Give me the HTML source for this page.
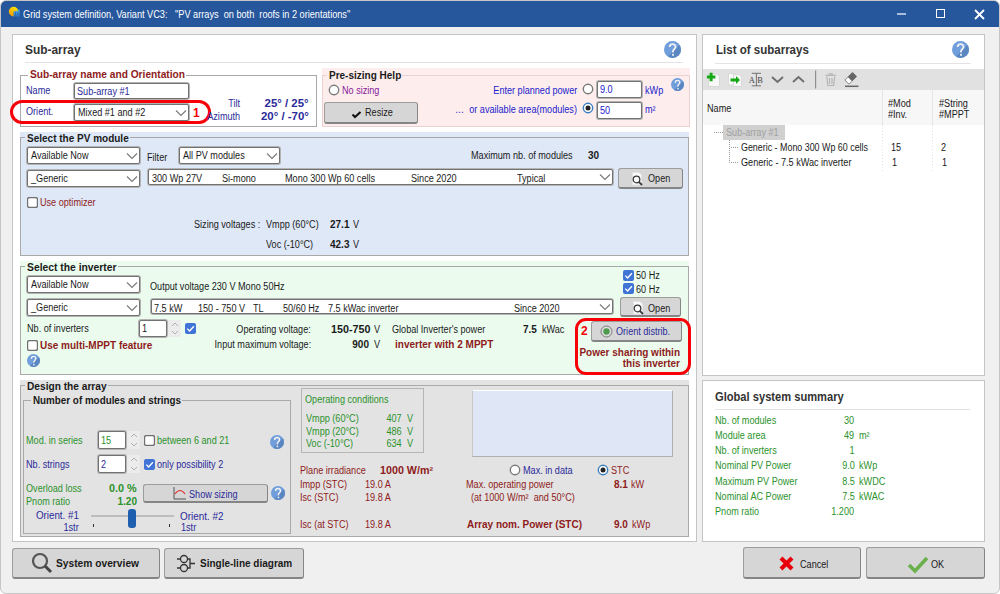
<!DOCTYPE html>
<html><head><meta charset="utf-8"><style>
html,body{margin:0;padding:0;width:1000px;height:594px;overflow:hidden;background:#fff;}
body{position:relative;font-family:"Liberation Sans",sans-serif;}
body>div,body>span,body>svg{position:absolute;}
span{white-space:pre;}
</style></head><body>
<div style="left:0;top:0;width:1000px;height:594px;background:#f0f0f0;border:1px solid #c6c6c6;border-radius:6px;box-sizing:border-box;"></div>
<div style="left:1px;top:1px;width:998px;height:26px;background:#26569c;border-radius:5px 5px 0 0;"></div>
<svg style="left:4px;top:0px" width="20" height="20"><defs><linearGradient id="tig" x1="0.7" y1="0" x2="0.2" y2="1"><stop offset="0" stop-color="#ffe000"/><stop offset="1" stop-color="#f59a00"/></linearGradient><linearGradient id="tib" x1="0" y1="0" x2="0" y2="1"><stop offset="0" stop-color="#4fb0ee"/><stop offset="1" stop-color="#2f6fc0"/></linearGradient></defs><path d="M9.6 16.4 A4.8 4.8 0 1 1 14.4 11.6 L9.6 11.6 Z" fill="url(#tig)"/><rect x="9.9" y="11.2" width="1.5" height="5.6" fill="url(#tib)"/><rect x="12" y="10.5" width="1.5" height="6.3" fill="url(#tib)"/><rect x="14.1" y="9.7" width="1.5" height="7.1" fill="url(#tib)"/></svg>
<span style="top:8.08px;font-size:11px;line-height:13.20px;color:#ffffff;left:23px;transform-origin:0 0;transform:scaleX(0.833);">Grid system definition, Variant VC3:   &quot;PV arrays  on both  roofs in 2 orientations&quot;</span>
<div style="left:897px;top:13px;width:9px;height:2px;background:#a9bedc;"></div>
<div style="left:936px;top:9px;width:9px;height:9px;border:1.5px solid #fff;box-sizing:border-box;"></div>
<svg style="left:974px;top:9px" width="11" height="11"><path d="M1 1 L10 10 M10 1 L1 10" stroke="#fff" stroke-width="1.8"/></svg>
<div style="left:12px;top:34px;width:685px;height:508px;background:#fff;border:1px solid #c4c4c4;box-sizing:border-box;"></div>
<span style="top:43.04px;font-size:12px;line-height:14.40px;color:#333;font-weight:bold;left:25px;transform-origin:0 0;transform:scaleX(0.991);">Sub-array</span>
<div style="left:25px;top:62px;width:658px;height:1px;background:#e3e3e3;"></div>
<svg style="left:663.5px;top:40.5px" width="17.0" height="17.0" viewBox="0 0 20 20"><defs><clipPath id="hc10"><circle cx="10" cy="10" r="10"/></clipPath></defs><circle cx="10" cy="10" r="10" fill="#6f9edb"/><path d="M20 3 L3 20 L20 20 Z" fill="#5a86c2" clip-path="url(#hc10)"/><path d="M6.6 7.2 C6.6 4.9 8.1 3.6 10.1 3.6 C12.2 3.6 13.6 4.9 13.6 6.9 C13.6 9.2 10.6 9.9 10.6 12.3 V13.6" fill="none" stroke="#f2f2f2" stroke-width="2.1"/><circle cx="10.6" cy="16.3" r="1.3" fill="#f2f2f2"/></svg>
<div style="left:20px;top:75px;width:297px;height:52px;border:1px solid #a9a9a9;box-sizing:border-box;"></div>
<div style="left:28px;top:70px;width:158px;height:11px;background:#fff;"></div>
<span style="top:69.21px;font-size:10px;line-height:12.00px;color:#8e1b1b;font-weight:bold;left:30px;transform-origin:0 0;transform:scaleX(1.018);">Sub-array name and Orientation</span>
<span style="top:84.61px;font-size:10px;line-height:12.00px;color:#2a2a9a;left:26px;transform-origin:0 0;transform:scaleX(0.910);">Name</span>
<div style="left:74px;top:83px;width:115px;height:16px;background:#fff;border:1px solid #727272;border-radius:2px;box-sizing:border-box;box-shadow:0 0 0 1px #b4b4b4;"></div>
<span style="top:85.61px;font-size:10px;line-height:12.00px;color:#2a2a9a;left:77px;transform-origin:0 0;transform:scaleX(0.910);">Sub-array #1</span>
<span style="top:105.61px;font-size:10px;line-height:12.00px;color:#2a2a9a;left:26px;transform-origin:0 0;transform:scaleX(0.910);">Orient.</span>
<div style="left:74px;top:104px;width:115px;height:17px;background:#fff;border:1px solid #727272;border-radius:2px;box-sizing:border-box;box-shadow:0 0 0 1px #b4b4b4;"></div>
<svg style="left:175px;top:108.5px" width="12" height="8"><path d="M1 1.5 L6 6.5 L11 1.5" fill="none" stroke="#7a7a7a" stroke-width="1.15"/></svg>
<span style="top:107.11px;font-size:10px;line-height:12.00px;color:#1a1a1a;left:78px;transform-origin:0 0;transform:scaleX(0.910);">Mixed #1 and #2</span>
<span style="top:105.54px;font-size:12px;line-height:14.40px;color:#f80008;font-weight:bold;left:193px;transform-origin:0 0;">1</span>
<div style="left:10px;top:100px;width:201px;height:24px;border:3px solid #f80008;border-radius:12px;box-sizing:border-box;"></div>
<span style="top:97.61px;font-size:10px;line-height:12.00px;color:#2a2a9a;left:227.04px;transform-origin:100% 0;transform:scaleX(0.910);">Tilt</span>
<span style="top:110.61px;font-size:10px;line-height:12.00px;color:#2a2a9a;left:203.88px;transform-origin:100% 0;transform:scaleX(0.910);">Azimuth</span>
<span style="top:97.61px;font-size:10px;line-height:12.00px;color:#2a2a9a;font-weight:bold;left:270.43px;transform-origin:100% 0;transform:scaleX(1.141);">25° / 25°</span>
<span style="top:110.61px;font-size:10px;line-height:12.00px;color:#2a2a9a;font-weight:bold;left:267.10px;transform-origin:100% 0;transform:scaleX(1.145);">20° / -70°</span>
<div style="left:322px;top:68px;width:368px;height:59px;background:#fdeded;"></div>
<div style="left:322px;top:75px;width:368px;height:52px;border:1px solid #ead2d2;box-sizing:border-box;"></div>
<div style="left:327px;top:69px;width:75px;height:12px;background:#fdeded;"></div>
<span style="top:69.61px;font-size:10px;line-height:12.00px;color:#1a1a1a;font-weight:bold;left:329px;transform-origin:0 0;">Pre-sizing Help</span>
<svg style="left:328.0px;top:84.0px" width="12" height="12"><circle cx="6.0" cy="6.0" r="4.7" fill="#fff" stroke="#7a7a7a" stroke-width="1.4"/></svg>
<span style="top:84.61px;font-size:10px;line-height:12.00px;color:#8a1a9a;left:342px;transform-origin:0 0;transform:scaleX(0.910);">No sizing</span>
<div style="left:324px;top:102px;width:94px;height:22px;background:#d6d6d6;border:1px solid #9c9c9c;border-right-color:#858585;border-bottom:2px solid #858585;border-radius:3px;box-sizing:border-box;"></div>
<svg style="left:351px;top:109px" width="11" height="10"><path d="M1.5 5.5 L4 8 L9.5 3" fill="none" stroke="#111" stroke-width="2"/></svg>
<span style="top:106.61px;font-size:10px;line-height:12.00px;color:#1a1a1a;left:365px;transform-origin:0 0;transform:scaleX(0.910);">Resize</span>
<span style="top:84.61px;font-size:10px;line-height:12.00px;color:#2222cc;left:484.72px;transform-origin:100% 0;transform:scaleX(0.910);">Enter planned power</span>
<svg style="left:582.0px;top:83.0px" width="12" height="12"><circle cx="6.0" cy="6.0" r="4.7" fill="#fff" stroke="#7a7a7a" stroke-width="1.4"/></svg>
<div style="left:597px;top:81px;width:45px;height:17px;background:#fff;border:1px solid #727272;border-radius:2px;box-sizing:border-box;box-shadow:0 0 0 1px #b4b4b4;"></div>
<span style="top:84.11px;font-size:10px;line-height:12.00px;color:#2222cc;left:600px;transform-origin:0 0;transform:scaleX(0.910);">9.0</span>
<span style="top:84.61px;font-size:10px;line-height:12.00px;color:#2222cc;left:645px;transform-origin:0 0;transform:scaleX(0.910);">kWp</span>
<span style="top:103.61px;font-size:10px;line-height:12.00px;color:#2222cc;left:443.06px;transform-origin:100% 0;transform:scaleX(0.910);">…  or available area(modules)</span>
<svg style="left:582.0px;top:102.0px" width="12" height="12"><circle cx="6.0" cy="6.0" r="4.7" fill="#fff" stroke="#3c7fc0" stroke-width="1.4"/><circle cx="6.0" cy="6.0" r="2.5" fill="#222"/></svg>
<div style="left:597px;top:102px;width:45px;height:17px;background:#fff;border:1px solid #727272;border-radius:2px;box-sizing:border-box;box-shadow:0 0 0 1px #b4b4b4;"></div>
<span style="top:105.11px;font-size:10px;line-height:12.00px;color:#2222cc;left:600px;transform-origin:0 0;transform:scaleX(0.910);">50</span>
<span style="top:103.61px;font-size:10px;line-height:12.00px;color:#2222cc;left:645px;transform-origin:0 0;transform:scaleX(0.910);">m²</span>
<svg style="left:670.5px;top:77.5px" width="13.0" height="13.0" viewBox="0 0 20 20"><defs><clipPath id="hc46"><circle cx="10" cy="10" r="10"/></clipPath></defs><circle cx="10" cy="10" r="10" fill="#6f9edb"/><path d="M20 3 L3 20 L20 20 Z" fill="#5a86c2" clip-path="url(#hc46)"/><path d="M6.6 7.2 C6.6 4.9 8.1 3.6 10.1 3.6 C12.2 3.6 13.6 4.9 13.6 6.9 C13.6 9.2 10.6 9.9 10.6 12.3 V13.6" fill="none" stroke="#f2f2f2" stroke-width="2.1"/><circle cx="10.6" cy="16.3" r="1.3" fill="#f2f2f2"/></svg>
<div style="left:20px;top:132px;width:669px;height:124px;background:#dfe8f7;"></div>
<div style="left:20px;top:137px;width:669px;height:119px;border:1px solid #a9a9a9;box-sizing:border-box;"></div>
<div style="left:25px;top:132px;width:105px;height:11px;background:#dfe8f7;"></div>
<span style="top:132.92px;font-size:10px;line-height:12.00px;color:#1a1a1a;font-weight:bold;left:27px;transform-origin:0 0;">Select the PV module</span>
<div style="left:27px;top:147px;width:113px;height:17px;background:#fff;border:1px solid #727272;border-radius:2px;box-sizing:border-box;box-shadow:0 0 0 1px #b4b4b4;"></div>
<svg style="left:126px;top:151.5px" width="12" height="8"><path d="M1 1.5 L6 6.5 L11 1.5" fill="none" stroke="#7a7a7a" stroke-width="1.15"/></svg>
<span style="top:150.12px;font-size:10px;line-height:12.00px;color:#1a1a1a;left:31px;transform-origin:0 0;transform:scaleX(0.910);">Available Now</span>
<span style="top:151.62px;font-size:10px;line-height:12.00px;color:#1a1a1a;left:147px;transform-origin:0 0;transform:scaleX(0.910);">Filter</span>
<div style="left:179px;top:147px;width:101px;height:17px;background:#fff;border:1px solid #727272;border-radius:2px;box-sizing:border-box;box-shadow:0 0 0 1px #b4b4b4;"></div>
<svg style="left:266px;top:151.5px" width="12" height="8"><path d="M1 1.5 L6 6.5 L11 1.5" fill="none" stroke="#7a7a7a" stroke-width="1.15"/></svg>
<span style="top:150.12px;font-size:10px;line-height:12.00px;color:#1a1a1a;left:183px;transform-origin:0 0;transform:scaleX(0.910);">All PV modules</span>
<span style="top:149.62px;font-size:10px;line-height:12.00px;color:#1a1a1a;left:471px;transform-origin:0 0;transform:scaleX(0.910);">Maximum nb. of modules</span>
<span style="top:149.62px;font-size:10px;line-height:12.00px;color:#1a1a1a;font-weight:bold;left:588px;transform-origin:0 0;">30</span>
<div style="left:27px;top:170px;width:113px;height:17px;background:#fff;border:1px solid #727272;border-radius:2px;box-sizing:border-box;box-shadow:0 0 0 1px #b4b4b4;"></div>
<svg style="left:126px;top:174.5px" width="12" height="8"><path d="M1 1.5 L6 6.5 L11 1.5" fill="none" stroke="#7a7a7a" stroke-width="1.15"/></svg>
<span style="top:173.12px;font-size:10px;line-height:12.00px;color:#1a1a1a;left:31px;transform-origin:0 0;transform:scaleX(0.910);">_Generic</span>
<div style="left:148px;top:169px;width:465px;height:16px;background:#fff;border:1px solid #727272;border-radius:2px;box-sizing:border-box;box-shadow:0 0 0 1px #b4b4b4;"></div>
<svg style="left:599px;top:173.0px" width="12" height="8"><path d="M1 1.5 L6 6.5 L11 1.5" fill="none" stroke="#7a7a7a" stroke-width="1.15"/></svg>
<span style="top:172.62px;font-size:10px;line-height:12.00px;color:#1a1a1a;left:152px;transform-origin:0 0;transform:scaleX(0.910);">300 Wp 27V</span>
<span style="top:172.62px;font-size:10px;line-height:12.00px;color:#1a1a1a;left:222px;transform-origin:0 0;transform:scaleX(0.910);">Si-mono</span>
<span style="top:172.62px;font-size:10px;line-height:12.00px;color:#1a1a1a;left:285px;transform-origin:0 0;transform:scaleX(0.910);">Mono 300 Wp 60 cells</span>
<span style="top:172.62px;font-size:10px;line-height:12.00px;color:#1a1a1a;left:411px;transform-origin:0 0;transform:scaleX(0.910);">Since 2020</span>
<span style="top:172.62px;font-size:10px;line-height:12.00px;color:#1a1a1a;left:517px;transform-origin:0 0;transform:scaleX(0.910);">Typical</span>
<div style="left:618px;top:168px;width:65px;height:21px;background:#d6d6d6;border:1px solid #9c9c9c;border-right-color:#858585;border-bottom:2px solid #858585;border-radius:3px;box-sizing:border-box;"></div>
<svg style="left:631px;top:172px" width="14" height="14"><path d="M1.5 0.5 H8 L10.5 3 V13 H1.5 Z" fill="#fafafa" stroke="#e4e4e4"/><circle cx="5.5" cy="7.5" r="3.3" fill="#fafafa" stroke="#3a3a3a" stroke-width="1.3"/><path d="M7.8 9.8 L11 13" stroke="#3a3a3a" stroke-width="1.8"/></svg>
<span style="top:172.62px;font-size:10px;line-height:12.00px;color:#1a1a1a;left:648px;transform-origin:0 0;transform:scaleX(0.910);">Open</span>
<svg style="left:27px;top:197px" width="11" height="11"><rect x="0.5" y="0.5" width="10" height="10" rx="2" fill="#fff" stroke="#707070" stroke-width="1.4"/></svg>
<span style="top:196.62px;font-size:10px;line-height:12.00px;color:#8e1b1b;left:40px;transform-origin:0 0;transform:scaleX(0.910);">Use optimizer</span>
<span style="top:218.62px;font-size:10px;line-height:12.00px;color:#1a1a1a;left:194px;transform-origin:0 0;transform:scaleX(0.910);">Sizing voltages :</span>
<span style="top:218.62px;font-size:10px;line-height:12.00px;color:#1a1a1a;left:266px;transform-origin:0 0;transform:scaleX(0.910);">Vmpp (60°C)</span>
<span style="top:218.62px;font-size:10px;line-height:12.00px;color:#1a1a1a;font-weight:bold;left:330px;transform-origin:0 0;">27.1</span>
<span style="top:218.62px;font-size:10px;line-height:12.00px;color:#1a1a1a;left:353px;transform-origin:0 0;transform:scaleX(0.910);">V</span>
<span style="top:238.62px;font-size:10px;line-height:12.00px;color:#1a1a1a;left:266px;transform-origin:0 0;transform:scaleX(0.910);">Voc (-10°C)</span>
<span style="top:238.62px;font-size:10px;line-height:12.00px;color:#1a1a1a;font-weight:bold;left:330px;transform-origin:0 0;">42.3</span>
<span style="top:238.62px;font-size:10px;line-height:12.00px;color:#1a1a1a;left:353px;transform-origin:0 0;transform:scaleX(0.910);">V</span>
<div style="left:20px;top:261px;width:669px;height:114px;background:#ebfcef;"></div>
<div style="left:20px;top:266px;width:669px;height:109px;border:1px solid #a9a9a9;box-sizing:border-box;"></div>
<div style="left:25px;top:261px;width:93px;height:11px;background:#ebfcef;"></div>
<span style="top:261.92px;font-size:10px;line-height:12.00px;color:#1a1a1a;font-weight:bold;left:27px;transform-origin:0 0;transform:scaleX(1.033);">Select the inverter</span>
<div style="left:27px;top:276px;width:113px;height:17px;background:#fff;border:1px solid #727272;border-radius:2px;box-sizing:border-box;box-shadow:0 0 0 1px #b4b4b4;"></div>
<svg style="left:126px;top:280.5px" width="12" height="8"><path d="M1 1.5 L6 6.5 L11 1.5" fill="none" stroke="#7a7a7a" stroke-width="1.15"/></svg>
<span style="top:279.12px;font-size:10px;line-height:12.00px;color:#1a1a1a;left:31px;transform-origin:0 0;transform:scaleX(0.910);">Available Now</span>
<span style="top:280.62px;font-size:10px;line-height:12.00px;color:#1a1a1a;left:150px;transform-origin:0 0;transform:scaleX(0.910);">Output voltage 230 V Mono 50Hz</span>
<svg style="left:623px;top:270px" width="11" height="11"><rect x="0" y="0" width="11" height="11" rx="2" fill="#3f74d6"/><path d="M2.3 5.6 L4.6 8 L8.9 3.2" fill="none" stroke="#fff" stroke-width="1.3"/></svg>
<span style="top:269.62px;font-size:10px;line-height:12.00px;color:#1a1a1a;left:636px;transform-origin:0 0;transform:scaleX(0.910);">50 Hz</span>
<svg style="left:623px;top:283px" width="11" height="11"><rect x="0" y="0" width="11" height="11" rx="2" fill="#3f74d6"/><path d="M2.3 5.6 L4.6 8 L8.9 3.2" fill="none" stroke="#fff" stroke-width="1.3"/></svg>
<span style="top:283.62px;font-size:10px;line-height:12.00px;color:#1a1a1a;left:636px;transform-origin:0 0;transform:scaleX(0.910);">60 Hz</span>
<div style="left:27px;top:299px;width:113px;height:17px;background:#fff;border:1px solid #727272;border-radius:2px;box-sizing:border-box;box-shadow:0 0 0 1px #b4b4b4;"></div>
<svg style="left:126px;top:303.5px" width="12" height="8"><path d="M1 1.5 L6 6.5 L11 1.5" fill="none" stroke="#7a7a7a" stroke-width="1.15"/></svg>
<span style="top:302.12px;font-size:10px;line-height:12.00px;color:#1a1a1a;left:31px;transform-origin:0 0;transform:scaleX(0.910);">_Generic</span>
<div style="left:151px;top:299px;width:462px;height:15px;background:#fff;border:1px solid #727272;border-radius:2px;box-sizing:border-box;box-shadow:0 0 0 1px #b4b4b4;"></div>
<svg style="left:599px;top:302.5px" width="12" height="8"><path d="M1 1.5 L6 6.5 L11 1.5" fill="none" stroke="#7a7a7a" stroke-width="1.15"/></svg>
<span style="top:302.62px;font-size:10px;line-height:12.00px;color:#1a1a1a;left:154px;transform-origin:0 0;transform:scaleX(0.910);">7.5 kW</span>
<span style="top:302.62px;font-size:10px;line-height:12.00px;color:#1a1a1a;left:198px;transform-origin:0 0;transform:scaleX(0.910);">150 - 750 V</span>
<span style="top:302.62px;font-size:10px;line-height:12.00px;color:#1a1a1a;left:253px;transform-origin:0 0;transform:scaleX(0.910);">TL</span>
<span style="top:302.62px;font-size:10px;line-height:12.00px;color:#1a1a1a;left:283px;transform-origin:0 0;transform:scaleX(0.910);">50/60 Hz</span>
<span style="top:302.62px;font-size:10px;line-height:12.00px;color:#1a1a1a;left:328px;transform-origin:0 0;transform:scaleX(0.910);">7.5 kWac inverter</span>
<span style="top:302.62px;font-size:10px;line-height:12.00px;color:#1a1a1a;left:514px;transform-origin:0 0;transform:scaleX(0.910);">Since 2020</span>
<div style="left:620px;top:297px;width:61px;height:20px;background:#d6d6d6;border:1px solid #9c9c9c;border-right-color:#858585;border-bottom:2px solid #858585;border-radius:3px;box-sizing:border-box;"></div>
<svg style="left:632px;top:301px" width="14" height="14"><path d="M1.5 0.5 H8 L10.5 3 V13 H1.5 Z" fill="#fafafa" stroke="#e4e4e4"/><circle cx="5.5" cy="7.5" r="3.3" fill="#fafafa" stroke="#3a3a3a" stroke-width="1.3"/><path d="M7.8 9.8 L11 13" stroke="#3a3a3a" stroke-width="1.8"/></svg>
<span style="top:302.62px;font-size:10px;line-height:12.00px;color:#1a1a1a;left:648px;transform-origin:0 0;transform:scaleX(0.910);">Open</span>
<span style="top:322.62px;font-size:10px;line-height:12.00px;color:#1a1a1a;left:27px;transform-origin:0 0;transform:scaleX(0.910);">Nb. of inverters</span>
<div style="left:139px;top:320px;width:28px;height:17px;background:#fff;border:1px solid #727272;border-radius:2px;box-sizing:border-box;box-shadow:0 0 0 1px #b4b4b4;"></div>
<span style="top:323.12px;font-size:10px;line-height:12.00px;color:#1a1a1a;left:142px;transform-origin:0 0;transform:scaleX(0.910);">1</span>
<div style="left:168px;top:320px;width:13px;height:17px;background:#ececec;"></div>
<svg style="left:169px;top:321px" width="12" height="15"><path d="M3 5 L6 2 L9 5 M3 10 L6 13 L9 10" fill="none" stroke="#b0b0b0" stroke-width="1"/></svg>
<svg style="left:185px;top:323px" width="11" height="11"><rect x="0" y="0" width="11" height="11" rx="2" fill="#3f74d6"/><path d="M2.3 5.6 L4.6 8 L8.9 3.2" fill="none" stroke="#fff" stroke-width="1.3"/></svg>
<span style="top:323.62px;font-size:10px;line-height:12.00px;color:#1a1a1a;left:229.29px;transform-origin:100% 0;transform:scaleX(0.910);">Operating voltage:</span>
<span style="top:323.62px;font-size:10px;line-height:12.00px;color:#1a1a1a;font-weight:bold;left:331px;transform-origin:0 0;transform:scaleX(1.076);">150-750</span>
<span style="top:323.62px;font-size:10px;line-height:12.00px;color:#1a1a1a;left:374px;transform-origin:0 0;transform:scaleX(0.910);">V</span>
<span style="top:323.62px;font-size:10px;line-height:12.00px;color:#1a1a1a;left:392px;transform-origin:0 0;transform:scaleX(0.910);">Global Inverter&#x27;s power</span>
<span style="top:323.62px;font-size:10px;line-height:12.00px;color:#1a1a1a;font-weight:bold;left:523px;transform-origin:0 0;">7.5</span>
<span style="top:323.62px;font-size:10px;line-height:12.00px;color:#1a1a1a;left:542px;transform-origin:0 0;transform:scaleX(0.910);">kWac</span>
<span style="top:338.62px;font-size:10px;line-height:12.00px;color:#1a1a1a;left:204.85px;transform-origin:100% 0;transform:scaleX(0.910);">Input maximum voltage:</span>
<span style="top:338.62px;font-size:10px;line-height:12.00px;color:#1a1a1a;font-weight:bold;left:352.32px;transform-origin:100% 0;">900</span>
<span style="top:338.62px;font-size:10px;line-height:12.00px;color:#1a1a1a;left:374px;transform-origin:0 0;transform:scaleX(0.910);">V</span>
<span style="top:338.62px;font-size:10px;line-height:12.00px;color:#8e1b1b;font-weight:bold;left:395px;transform-origin:0 0;">inverter with 2 MPPT</span>
<svg style="left:27px;top:340px" width="11" height="11"><rect x="0.5" y="0.5" width="10" height="10" rx="2" fill="#fff" stroke="#707070" stroke-width="1.4"/></svg>
<span style="top:339.62px;font-size:10px;line-height:12.00px;color:#8e1b1b;font-weight:bold;left:40px;transform-origin:0 0;">Use multi-MPPT feature</span>
<svg style="left:26.5px;top:353.5px" width="13.0" height="13.0" viewBox="0 0 20 20"><defs><clipPath id="hc126"><circle cx="10" cy="10" r="10"/></clipPath></defs><circle cx="10" cy="10" r="10" fill="#6f9edb"/><path d="M20 3 L3 20 L20 20 Z" fill="#5a86c2" clip-path="url(#hc126)"/><path d="M6.6 7.2 C6.6 4.9 8.1 3.6 10.1 3.6 C12.2 3.6 13.6 4.9 13.6 6.9 C13.6 9.2 10.6 9.9 10.6 12.3 V13.6" fill="none" stroke="#f2f2f2" stroke-width="2.1"/><circle cx="10.6" cy="16.3" r="1.3" fill="#f2f2f2"/></svg>
<div style="left:591px;top:321px;width:91px;height:21px;background:#d6d6d6;border:1px solid #9c9c9c;border-right-color:#858585;border-bottom:2px solid #858585;border-radius:3px;box-sizing:border-box;"></div>
<svg style="left:600px;top:325px" width="13" height="13"><circle cx="6.5" cy="6.5" r="5.5" fill="#ddd" stroke="#777" stroke-width="1"/><circle cx="6.5" cy="6.5" r="3.2" fill="#4f9a4f"/></svg>
<span style="top:325.62px;font-size:10px;line-height:12.00px;color:#2a2a9a;left:616px;transform-origin:0 0;transform:scaleX(0.910);">Orient distrib.</span>
<span style="top:323.54px;font-size:12px;line-height:14.40px;color:#f80008;font-weight:bold;left:581px;transform-origin:0 0;">2</span>
<span style="top:346.62px;font-size:10px;line-height:12.00px;color:#8e1b1b;font-weight:bold;left:579.44px;transform-origin:100% 0;">Power sharing within</span>
<span style="top:357.62px;font-size:10px;line-height:12.00px;color:#8e1b1b;font-weight:bold;left:622.76px;transform-origin:100% 0;">this inverter</span>
<div style="left:575px;top:318px;width:116px;height:57px;border:3px solid #f80008;border-radius:11px;box-sizing:border-box;"></div>
<div style="left:20px;top:380px;width:669px;height:157px;background:#e3e3e3;"></div>
<div style="left:20px;top:385px;width:669px;height:152px;border:1px solid #a9a9a9;box-sizing:border-box;"></div>
<div style="left:25px;top:380px;width:83px;height:11px;background:#e3e3e3;"></div>
<span style="top:380.92px;font-size:10px;line-height:12.00px;color:#1a1a1a;font-weight:bold;left:27px;transform-origin:0 0;transform:scaleX(1.016);">Design the array</span>
<div style="left:23px;top:400px;width:268px;height:134px;border:1px solid #a9a9a9;box-sizing:border-box;"></div>
<div style="left:31px;top:395px;width:151px;height:11px;background:#e3e3e3;"></div>
<span style="top:394.81px;font-size:10px;line-height:12.00px;color:#1a1a1a;font-weight:bold;left:33px;transform-origin:0 0;transform:scaleX(0.983);">Number of modules and strings</span>
<span style="top:434.62px;font-size:10px;line-height:12.00px;color:#2b922b;left:26px;transform-origin:0 0;transform:scaleX(0.910);">Mod. in series</span>
<div style="left:98px;top:431px;width:28px;height:18px;background:#fff;border:1px solid #727272;border-radius:2px;box-sizing:border-box;box-shadow:0 0 0 1px #b4b4b4;"></div>
<span style="top:434.62px;font-size:10px;line-height:12.00px;color:#2b922b;left:101px;transform-origin:0 0;transform:scaleX(0.910);">15</span>
<div style="left:127px;top:431px;width:13px;height:18px;background:#ececec;"></div>
<svg style="left:128px;top:432px" width="12" height="16"><path d="M3 5 L6 2 L9 5 M3 11 L6 14 L9 11" fill="none" stroke="#b0b0b0" stroke-width="1"/></svg>
<svg style="left:144px;top:435px" width="11" height="11"><rect x="0.5" y="0.5" width="10" height="10" rx="2" fill="#fff" stroke="#707070" stroke-width="1.4"/></svg>
<span style="top:434.62px;font-size:10px;line-height:12.00px;color:#2b922b;left:157px;transform-origin:0 0;transform:scaleX(0.910);">between 6 and 21</span>
<svg style="left:270px;top:435px" width="14" height="14" viewBox="0 0 20 20"><defs><clipPath id="hc148"><circle cx="10" cy="10" r="10"/></clipPath></defs><circle cx="10" cy="10" r="10" fill="#6f9edb"/><path d="M20 3 L3 20 L20 20 Z" fill="#5a86c2" clip-path="url(#hc148)"/><path d="M6.6 7.2 C6.6 4.9 8.1 3.6 10.1 3.6 C12.2 3.6 13.6 4.9 13.6 6.9 C13.6 9.2 10.6 9.9 10.6 12.3 V13.6" fill="none" stroke="#f2f2f2" stroke-width="2.1"/><circle cx="10.6" cy="16.3" r="1.3" fill="#f2f2f2"/></svg>
<span style="top:458.62px;font-size:10px;line-height:12.00px;color:#2a2a9a;left:26px;transform-origin:0 0;transform:scaleX(0.910);">Nb. strings</span>
<div style="left:98px;top:455px;width:28px;height:18px;background:#fff;border:1px solid #727272;border-radius:2px;box-sizing:border-box;box-shadow:0 0 0 1px #b4b4b4;"></div>
<span style="top:458.62px;font-size:10px;line-height:12.00px;color:#2a2a9a;left:101px;transform-origin:0 0;transform:scaleX(0.910);">2</span>
<div style="left:127px;top:455px;width:13px;height:18px;background:#ececec;"></div>
<svg style="left:128px;top:456px" width="12" height="16"><path d="M3 5 L6 2 L9 5 M3 11 L6 14 L9 11" fill="none" stroke="#b0b0b0" stroke-width="1"/></svg>
<svg style="left:144px;top:459px" width="11" height="11"><rect x="0" y="0" width="11" height="11" rx="2" fill="#3f74d6"/><path d="M2.3 5.6 L4.6 8 L8.9 3.2" fill="none" stroke="#fff" stroke-width="1.3"/></svg>
<span style="top:458.62px;font-size:10px;line-height:12.00px;color:#2a2a9a;left:157px;transform-origin:0 0;transform:scaleX(0.910);">only possibility 2</span>
<span style="top:482.62px;font-size:10px;line-height:12.00px;color:#2b922b;left:26px;transform-origin:0 0;transform:scaleX(0.910);">Overload loss</span>
<span style="top:482.62px;font-size:10px;line-height:12.00px;color:#2b922b;font-weight:bold;left:111.43px;transform-origin:100% 0;transform:scaleX(1.083);">0.0 %</span>
<span style="top:495.62px;font-size:10px;line-height:12.00px;color:#2b922b;left:26px;transform-origin:0 0;transform:scaleX(0.910);">Pnom ratio</span>
<span style="top:495.62px;font-size:10px;line-height:12.00px;color:#2b922b;font-weight:bold;left:117.54px;transform-origin:100% 0;">1.20</span>
<div style="left:143px;top:484px;width:125px;height:19px;background:#d6d6d6;border:1px solid #9c9c9c;border-right-color:#858585;border-bottom:2px solid #858585;border-radius:3px;box-sizing:border-box;"></div>
<svg style="left:173px;top:486px" width="14" height="14"><path d="M1 1 V13 H13" fill="none" stroke="#555" stroke-width="1"/><path d="M2 8 Q7 1 12 8" fill="none" stroke="#e03030" stroke-width="1.2"/></svg>
<span style="top:488.62px;font-size:10px;line-height:12.00px;color:#2a2a9a;left:189px;transform-origin:0 0;transform:scaleX(0.910);">Show sizing</span>
<svg style="left:271px;top:486px" width="14" height="14" viewBox="0 0 20 20"><defs><clipPath id="hc163"><circle cx="10" cy="10" r="10"/></clipPath></defs><circle cx="10" cy="10" r="10" fill="#6f9edb"/><path d="M20 3 L3 20 L20 20 Z" fill="#5a86c2" clip-path="url(#hc163)"/><path d="M6.6 7.2 C6.6 4.9 8.1 3.6 10.1 3.6 C12.2 3.6 13.6 4.9 13.6 6.9 C13.6 9.2 10.6 9.9 10.6 12.3 V13.6" fill="none" stroke="#f2f2f2" stroke-width="2.1"/><circle cx="10.6" cy="16.3" r="1.3" fill="#f2f2f2"/></svg>
<span style="top:509.62px;font-size:10px;line-height:12.00px;color:#2a2a9a;left:35.09px;transform-origin:100% 0;transform:scaleX(0.979);">Orient. #1</span>
<span style="top:521.62px;font-size:10px;line-height:12.00px;color:#2a2a9a;left:62.33px;transform-origin:100% 0;transform:scaleX(0.910);">1str</span>
<div style="left:91px;top:515px;width:83px;height:2px;background:#bdbdbd;"></div>
<div style="left:128px;top:509px;width:8px;height:19px;background:#1f5fb0;border-radius:3px;"></div>
<div style="left:93px;top:524px;width:1px;height:3px;background:#333;"></div>
<div style="left:169px;top:524px;width:1px;height:3px;background:#333;"></div>
<span style="top:510.62px;font-size:10px;line-height:12.00px;color:#2a2a9a;left:180px;transform-origin:0 0;transform:scaleX(0.991);">Orient. #2</span>
<span style="top:521.62px;font-size:10px;line-height:12.00px;color:#2a2a9a;left:181px;transform-origin:0 0;transform:scaleX(0.910);">1str</span>
<div style="left:301px;top:388px;width:123px;height:65px;border:1px solid #b5b5b5;box-sizing:border-box;"></div>
<span style="top:393.62px;font-size:10px;line-height:12.00px;color:#2b922b;left:305px;transform-origin:0 0;transform:scaleX(0.910);">Operating conditions</span>
<span style="top:412.62px;font-size:10px;line-height:12.00px;color:#2b922b;left:306px;transform-origin:0 0;transform:scaleX(0.910);">Vmpp (60°C)</span>
<span style="top:412.62px;font-size:10px;line-height:12.00px;color:#2b922b;left:385.32px;transform-origin:100% 0;transform:scaleX(0.910);">407</span>
<span style="top:412.62px;font-size:10px;line-height:12.00px;color:#2b922b;left:407px;transform-origin:0 0;transform:scaleX(0.910);">V</span>
<span style="top:425.62px;font-size:10px;line-height:12.00px;color:#2b922b;left:306px;transform-origin:0 0;transform:scaleX(0.910);">Vmpp (20°C)</span>
<span style="top:425.62px;font-size:10px;line-height:12.00px;color:#2b922b;left:385.32px;transform-origin:100% 0;transform:scaleX(0.910);">486</span>
<span style="top:425.62px;font-size:10px;line-height:12.00px;color:#2b922b;left:407px;transform-origin:0 0;transform:scaleX(0.910);">V</span>
<span style="top:437.62px;font-size:10px;line-height:12.00px;color:#2b922b;left:306px;transform-origin:0 0;transform:scaleX(0.910);">Voc (-10°C)</span>
<span style="top:437.62px;font-size:10px;line-height:12.00px;color:#2b922b;left:385.32px;transform-origin:100% 0;transform:scaleX(0.910);">634</span>
<span style="top:437.62px;font-size:10px;line-height:12.00px;color:#2b922b;left:407px;transform-origin:0 0;transform:scaleX(0.910);">V</span>
<span style="top:464.62px;font-size:10px;line-height:12.00px;color:#8e1b1b;left:300px;transform-origin:0 0;transform:scaleX(0.910);">Plane irradiance</span>
<span style="top:464.62px;font-size:10px;line-height:12.00px;color:#8e1b1b;font-weight:bold;left:380px;transform-origin:0 0;transform:scaleX(1.072);">1000 W/m²</span>
<span style="top:478.62px;font-size:10px;line-height:12.00px;color:#8e1b1b;left:300px;transform-origin:0 0;transform:scaleX(0.910);">Impp (STC)</span>
<span style="top:478.62px;font-size:10px;line-height:12.00px;color:#8e1b1b;left:365px;transform-origin:0 0;transform:scaleX(0.910);">19.0 A</span>
<span style="top:491.62px;font-size:10px;line-height:12.00px;color:#8e1b1b;left:300px;transform-origin:0 0;transform:scaleX(0.910);">Isc (STC)</span>
<span style="top:491.62px;font-size:10px;line-height:12.00px;color:#8e1b1b;left:365px;transform-origin:0 0;transform:scaleX(0.910);">19.8 A</span>
<span style="top:518.62px;font-size:10px;line-height:12.00px;color:#8e1b1b;left:300px;transform-origin:0 0;transform:scaleX(0.910);">Isc (at STC)</span>
<span style="top:518.62px;font-size:10px;line-height:12.00px;color:#8e1b1b;left:365px;transform-origin:0 0;transform:scaleX(0.910);">19.8 A</span>
<div style="left:472px;top:390px;width:201px;height:67px;background:#dfe7f6;border:1px solid #b0b0b0;border-top-color:#fff;border-left-color:#c8c8c8;box-sizing:border-box;"></div>
<svg style="left:509.0px;top:464.0px" width="12" height="12"><circle cx="6.0" cy="6.0" r="4.7" fill="#fff" stroke="#7a7a7a" stroke-width="1.4"/></svg>
<span style="top:464.62px;font-size:10px;line-height:12.00px;color:#2a2a9a;left:523px;transform-origin:0 0;transform:scaleX(0.910);">Max. in data</span>
<svg style="left:597.0px;top:464.0px" width="12" height="12"><circle cx="6.0" cy="6.0" r="4.7" fill="#fff" stroke="#3c7fc0" stroke-width="1.4"/><circle cx="6.0" cy="6.0" r="2.5" fill="#222"/></svg>
<span style="top:464.62px;font-size:10px;line-height:12.00px;color:#8e1b1b;left:611px;transform-origin:0 0;transform:scaleX(0.910);">STC</span>
<span style="top:478.62px;font-size:10px;line-height:12.00px;color:#8e1b1b;left:466px;transform-origin:0 0;transform:scaleX(0.910);">Max. operating power</span>
<span style="top:478.62px;font-size:10px;line-height:12.00px;color:#8e1b1b;font-weight:bold;left:614px;transform-origin:0 0;">8.1</span>
<span style="top:478.62px;font-size:10px;line-height:12.00px;color:#8e1b1b;left:631px;transform-origin:0 0;transform:scaleX(0.910);">kW</span>
<span style="top:491.62px;font-size:10px;line-height:12.00px;color:#8e1b1b;left:471px;transform-origin:0 0;transform:scaleX(0.910);">(at 1000 W/m²  and 50°C)</span>
<span style="top:518.62px;font-size:10px;line-height:12.00px;color:#8e1b1b;font-weight:bold;left:467px;transform-origin:0 0;">Array nom. Power (STC)</span>
<span style="top:518.62px;font-size:10px;line-height:12.00px;color:#8e1b1b;font-weight:bold;left:614px;transform-origin:0 0;">9.0</span>
<span style="top:518.62px;font-size:10px;line-height:12.00px;color:#8e1b1b;left:632px;transform-origin:0 0;transform:scaleX(0.910);">kWp</span>
<div style="left:12px;top:548px;width:148px;height:31px;background:#d6d6d6;border:1px solid #9c9c9c;border-right-color:#858585;border-bottom:2px solid #858585;border-radius:3px;box-sizing:border-box;"></div>
<svg style="left:31px;top:552px" width="22" height="22"><circle cx="9" cy="9" r="7" fill="none" stroke="#555" stroke-width="2.2"/><path d="M14 14 L20 20" stroke="#444" stroke-width="3"/></svg>
<span style="top:557.62px;font-size:10px;line-height:12.00px;color:#1a1a1a;font-weight:bold;left:56px;transform-origin:0 0;transform:scaleX(1.023);">System overview</span>
<div style="left:164px;top:548px;width:140px;height:31px;background:#d6d6d6;border:1px solid #9c9c9c;border-right-color:#858585;border-bottom:2px solid #858585;border-radius:3px;box-sizing:border-box;"></div>
<svg style="left:176px;top:554px" width="20" height="20"><circle cx="8" cy="5" r="3.5" fill="none" stroke="#333" stroke-width="1.3"/><circle cx="8" cy="14" r="3.5" fill="none" stroke="#333" stroke-width="1.3"/><path d="M1 5 H4.5 M1 14 H4.5 M11.5 5 H14 V14 H11.5 M14 9.5 H19" fill="none" stroke="#333" stroke-width="1.3"/></svg>
<span style="top:557.62px;font-size:10px;line-height:12.00px;color:#1a1a1a;font-weight:bold;left:200px;transform-origin:0 0;">Single-line diagram</span>
<div style="left:702px;top:34px;width:283px;height:342px;background:#fff;border:1px solid #c4c4c4;box-sizing:border-box;"></div>
<span style="top:43.34px;font-size:12px;line-height:14.40px;color:#333;font-weight:bold;left:715.6px;transform-origin:0 0;transform:scaleX(0.960);">List of subarrays</span>
<div style="left:715px;top:63px;width:256px;height:1px;background:#e3e3e3;"></div>
<svg style="left:951.5px;top:40.5px" width="17.0" height="17.0" viewBox="0 0 20 20"><defs><clipPath id="hc212"><circle cx="10" cy="10" r="10"/></clipPath></defs><circle cx="10" cy="10" r="10" fill="#6f9edb"/><path d="M20 3 L3 20 L20 20 Z" fill="#5a86c2" clip-path="url(#hc212)"/><path d="M6.6 7.2 C6.6 4.9 8.1 3.6 10.1 3.6 C12.2 3.6 13.6 4.9 13.6 6.9 C13.6 9.2 10.6 9.9 10.6 12.3 V13.6" fill="none" stroke="#f2f2f2" stroke-width="2.1"/><circle cx="10.6" cy="16.3" r="1.3" fill="#f2f2f2"/></svg>
<div style="left:703px;top:69px;width:281px;height:21px;background:#e1e1e1;"></div>
<svg style="left:703px;top:68px" width="160" height="24"><path d="M5.5 6 H14 L16.5 8.5 V18.5 H5.5 Z" fill="#f8f8f8" stroke="#d4d4d4" stroke-width="0.8"/><path d="M8.1 4.8 V13.3 M3.9 9 H12.4" stroke="#17a817" stroke-width="3"/><path d="M25.5 5.5 H31 V17 H25.5 Z" fill="#f8f8f8" stroke="#d4d4d4" stroke-width="0.8"/><path d="M30.5 6.5 H36 L38.5 9 V18.5 H30.5 Z" fill="#f8f8f8" stroke="#d4d4d4" stroke-width="0.8"/><path d="M27.5 12 H33.5" stroke="#17a817" stroke-width="3"/><path d="M33 8 L37 12 L33 16 Z" fill="#17a817"/><text x="45.8" y="15" font-family="Liberation Serif" font-size="8.5" fill="#444">A</text><text x="54.3" y="15" font-family="Liberation Serif" font-size="8.5" fill="#444">B</text><path d="M53.4 5.3 V18 M48.8 5.3 H58 M48.8 17.8 H58" fill="none" stroke="#666" stroke-width="0.9"/><path d="M69 9 L74.5 14 L80 9 M90 14 L95.5 9 L101 14" fill="none" stroke="#6e6e6e" stroke-width="1.9"/><rect x="112" y="2.5" width="1.2" height="18" fill="#8f8f8f"/><path d="M122.5 7.3 H133 M125.5 5.8 H130 M123.8 8.5 L124.8 17.5 H130.7 L131.7 8.5 M126.5 10 V16 M129 10 V16" fill="none" stroke="#b5b5b5" stroke-width="1.2"/><path d="M141.5 12 L149.5 4 L154 8.5 L146 16.5 Z" fill="#666"/><path d="M142.3 12 L145 9.3 L148.8 13.1 L146 15.8 Z" fill="#fff"/><path d="M142 18.3 H155.5" stroke="#666" stroke-width="1.5"/></svg>
<div style="left:703px;top:90px;width:281px;height:35px;background:#f7f7f7;"></div>
<div style="left:882px;top:90px;width:1px;height:35px;background:#e6e6e6;"></div>
<div style="left:932px;top:90px;width:1px;height:35px;background:#e6e6e6;"></div>
<span style="top:102.61px;font-size:10px;line-height:12.00px;color:#1a1a1a;left:707px;transform-origin:0 0;transform:scaleX(0.910);">Name</span>
<span style="top:97.61px;font-size:10px;line-height:12.00px;color:#1a1a1a;left:888px;transform-origin:0 0;transform:scaleX(0.910);">#Mod</span>
<span style="top:108.61px;font-size:10px;line-height:12.00px;color:#1a1a1a;left:888px;transform-origin:0 0;transform:scaleX(0.910);">#Inv.</span>
<span style="top:97.61px;font-size:10px;line-height:12.00px;color:#1a1a1a;left:939px;transform-origin:0 0;transform:scaleX(0.910);">#String</span>
<span style="top:108.61px;font-size:10px;line-height:12.00px;color:#1a1a1a;left:939px;transform-origin:0 0;transform:scaleX(0.910);">#MPPT</span>
<div style="left:723px;top:125px;width:62px;height:15px;background:#d0d0d0;"></div>
<span style="top:126.61px;font-size:10px;line-height:12.00px;color:#a0a0a0;left:726px;transform-origin:0 0;transform:scaleX(0.910);">Sub-array #1</span>
<svg style="left:712px;top:125px" width="30" height="40"><path d="M2 7.5 H11 M17.5 15 V37.5 H27 M19 22.5 H27" fill="none" stroke="#999" stroke-width="1" stroke-dasharray="1 1"/></svg>
<svg style="left:880px;top:125px" width="60" height="46"><path d="M2.5 0 V46 M52.5 0 V46" fill="none" stroke="#e4e4e4" stroke-width="1" stroke-dasharray="1 2"/></svg>
<span style="top:141.62px;font-size:10px;line-height:12.00px;color:#1a1a1a;left:741px;transform-origin:0 0;transform:scaleX(0.889);">Generic - Mono 300 Wp 60 cells</span>
<span style="top:156.62px;font-size:10px;line-height:12.00px;color:#1a1a1a;left:741px;transform-origin:0 0;transform:scaleX(0.910);">Generic - 7.5 kWac inverter</span>
<span style="top:141.62px;font-size:10px;line-height:12.00px;color:#1a1a1a;left:891px;transform-origin:0 0;transform:scaleX(0.910);">15</span>
<span style="top:141.62px;font-size:10px;line-height:12.00px;color:#1a1a1a;left:941px;transform-origin:0 0;transform:scaleX(0.910);">2</span>
<span style="top:156.62px;font-size:10px;line-height:12.00px;color:#1a1a1a;left:892px;transform-origin:0 0;transform:scaleX(0.910);">1</span>
<span style="top:156.62px;font-size:10px;line-height:12.00px;color:#1a1a1a;left:942px;transform-origin:0 0;transform:scaleX(0.910);">1</span>
<div style="left:702px;top:380px;width:283px;height:162px;background:#fff;border:1px solid #c4c4c4;box-sizing:border-box;"></div>
<span style="top:389.54px;font-size:12px;line-height:14.40px;color:#333;font-weight:bold;left:715px;transform-origin:0 0;transform:scaleX(0.928);">Global system summary</span>
<div style="left:715px;top:409px;width:255px;height:1px;background:#e3e3e3;"></div>
<span style="top:414.81px;font-size:10px;line-height:12.00px;color:#2b922b;left:715px;transform-origin:0 0;transform:scaleX(0.910);">Nb. of modules</span>
<span style="top:414.81px;font-size:10px;line-height:12.00px;color:#2b922b;left:843.38px;transform-origin:100% 0;transform:scaleX(0.910);">30</span>
<span style="top:430.01px;font-size:10px;line-height:12.00px;color:#2b922b;left:715px;transform-origin:0 0;transform:scaleX(0.910);">Module area</span>
<span style="top:430.01px;font-size:10px;line-height:12.00px;color:#2b922b;left:843.38px;transform-origin:100% 0;transform:scaleX(0.910);">49</span>
<span style="top:430.01px;font-size:10px;line-height:12.00px;color:#2b922b;left:859px;transform-origin:0 0;transform:scaleX(0.910);">m²</span>
<span style="top:445.21px;font-size:10px;line-height:12.00px;color:#2b922b;left:715px;transform-origin:0 0;transform:scaleX(0.910);">Nb. of inverters</span>
<span style="top:445.21px;font-size:10px;line-height:12.00px;color:#2b922b;left:848.94px;transform-origin:100% 0;transform:scaleX(0.910);">1</span>
<span style="top:460.41px;font-size:10px;line-height:12.00px;color:#2b922b;left:715px;transform-origin:0 0;transform:scaleX(0.910);">Nominal PV Power</span>
<span style="top:460.41px;font-size:10px;line-height:12.00px;color:#2b922b;left:840.60px;transform-origin:100% 0;transform:scaleX(0.910);">9.0</span>
<span style="top:460.41px;font-size:10px;line-height:12.00px;color:#2b922b;left:859px;transform-origin:0 0;transform:scaleX(0.910);">kWp</span>
<span style="top:475.62px;font-size:10px;line-height:12.00px;color:#2b922b;left:715px;transform-origin:0 0;transform:scaleX(0.910);">Maximum PV Power</span>
<span style="top:475.62px;font-size:10px;line-height:12.00px;color:#2b922b;left:840.60px;transform-origin:100% 0;transform:scaleX(0.910);">8.5</span>
<span style="top:475.62px;font-size:10px;line-height:12.00px;color:#2b922b;left:859px;transform-origin:0 0;transform:scaleX(0.910);">kWDC</span>
<span style="top:490.81px;font-size:10px;line-height:12.00px;color:#2b922b;left:715px;transform-origin:0 0;transform:scaleX(0.910);">Nominal AC Power</span>
<span style="top:490.81px;font-size:10px;line-height:12.00px;color:#2b922b;left:840.60px;transform-origin:100% 0;transform:scaleX(0.910);">7.5</span>
<span style="top:490.81px;font-size:10px;line-height:12.00px;color:#2b922b;left:859px;transform-origin:0 0;transform:scaleX(0.910);">kWAC</span>
<span style="top:506.01px;font-size:10px;line-height:12.00px;color:#2b922b;left:715px;transform-origin:0 0;transform:scaleX(0.910);">Pnom ratio</span>
<span style="top:506.01px;font-size:10px;line-height:12.00px;color:#2b922b;left:829.48px;transform-origin:100% 0;transform:scaleX(0.910);">1.200</span>
<div style="left:743px;top:547px;width:118px;height:32px;background:#d6d6d6;border:1px solid #9c9c9c;border-right-color:#858585;border-bottom:2px solid #858585;border-radius:3px;box-sizing:border-box;"></div>
<svg style="left:778px;top:555px" width="18" height="18"><path d="M3 3 L14 14 M14 3 L3 14" stroke="#e8000a" stroke-width="4.2" stroke-linecap="butt"/></svg>
<span style="top:558.62px;font-size:10px;line-height:12.00px;color:#1a1a1a;left:800px;transform-origin:0 0;transform:scaleX(0.910);">Cancel</span>
<div style="left:866px;top:547px;width:119px;height:32px;background:#d6d6d6;border:1px solid #9c9c9c;border-right-color:#858585;border-bottom:2px solid #858585;border-radius:3px;box-sizing:border-box;"></div>
<svg style="left:907px;top:554px" width="22" height="20"><path d="M2 11 L8 17 L20 4" fill="none" stroke="#6ab04c" stroke-width="3.6"/></svg>
<span style="top:558.62px;font-size:10px;line-height:12.00px;color:#1a1a1a;left:931px;transform-origin:0 0;transform:scaleX(0.910);">OK</span>
</body></html>
